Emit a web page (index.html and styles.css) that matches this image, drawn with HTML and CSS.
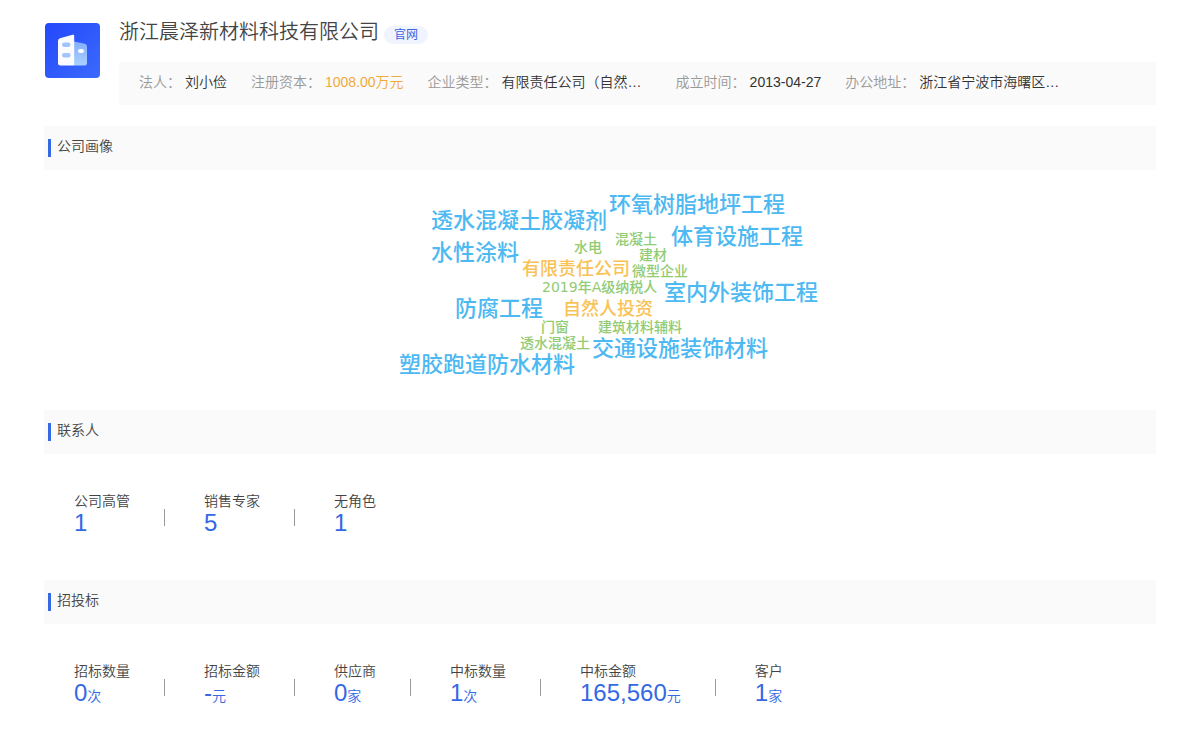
FILE: index.html
```html
<!DOCTYPE html>
<html lang="zh-CN">
<head>
<meta charset="utf-8">
<title>浙江晨泽新材料科技有限公司</title>
<link rel="stylesheet" href="styles.css">
</head>
<body>
<main class="page">
  <header class="company">
    <svg class="logo" viewBox="0 0 55 55" aria-hidden="true">
      <defs>
        <linearGradient id="bg" x1="0" y1="0" x2="1" y2="1"><stop offset="0" stop-color="#2348fb"/><stop offset="1" stop-color="#3b6afc"/></linearGradient>
        <linearGradient id="wing" x1="0" y1="0" x2="0" y2="1"><stop offset="0" stop-color="#84aefb"/><stop offset="1" stop-color="#a9d0fd"/></linearGradient>
      </defs>
      <rect width="55" height="55" rx="4" fill="url(#bg)"/>
      <path d="M29 18.500l11 2.300q2 .5 2 2.500v17q0 2.200-2.200 2.200H29z" fill="url(#wing)"/>
      <path d="M13 18q0-2 2-2.700l12.500-3.500q1.700-.4 1.700 1.200v29.500H15.300Q13 42.500 13 40.300z" fill="#fafcff"/>
      <rect x="17" y="19.500" width="8.500" height="4.500" rx="2.200" fill="#a3c4fb"/>
      <rect x="17" y="30" width="8.500" height="4.500" rx="2.200" fill="#a3c4fb"/>
      <rect x="33" y="26" width="6" height="4" rx="2" fill="#fafcff"/>
    </svg>
    <div class="summary">
      <div class="title-row">
        <h1 class="name">浙江晨泽新材料科技有限公司</h1>
        <a class="site" href="#">官网</a>
      </div>
      <dl class="facts">
        <div class="fact"><dt>法人：</dt><dd>刘小俭</dd></div>
        <div class="fact"><dt>注册资本：</dt><dd class="money">1008.00万元</dd></div>
        <div class="fact"><dt>企业类型：</dt><dd class="long">有限责任公司（自然…</dd></div>
        <div class="fact"><dt>成立时间：</dt><dd>2013-04-27</dd></div>
        <div class="fact"><dt>办公地址：</dt><dd class="long">浙江省宁波市海曙区…</dd></div>
      </dl>
    </div>
  </header>

  <section>
    <h2 class="heading">公司画像</h2>
    <div class="cloud">
      <span class="word large w1">环氧树脂地坪工程</span>
      <span class="word large w2">透水混凝土胶凝剂</span>
      <span class="word large w3">体育设施工程</span>
      <span class="word large w4">水性涂料</span>
      <span class="word large w5">室内外装饰工程</span>
      <span class="word large w6">防腐工程</span>
      <span class="word large w7">交通设施装饰材料</span>
      <span class="word large w8">塑胶跑道防水材料</span>
      <span class="word medium w9">有限责任公司</span>
      <span class="word medium w10">自然人投资</span>
      <span class="word small w11">混凝土</span>
      <span class="word small w12">水电</span>
      <span class="word small w13">建材</span>
      <span class="word small w14">微型企业</span>
      <span class="word small w15">2019年A级纳税人</span>
      <span class="word small w16">门窗</span>
      <span class="word small w17">建筑材料辅料</span>
      <span class="word small w18">透水混凝土</span>
    </div>
  </section>

  <section>
    <h2 class="heading">联系人</h2>
    <dl class="stats">
      <div class="stat"><dt>公司高管</dt><dd>1</dd></div>
      <div class="stat"><dt>销售专家</dt><dd>5</dd></div>
      <div class="stat"><dt>无角色</dt><dd>1</dd></div>
    </dl>
  </section>

  <section>
    <h2 class="heading">招投标</h2>
    <dl class="stats">
      <div class="stat"><dt>招标数量</dt><dd>0<small>次</small></dd></div>
      <div class="stat"><dt>招标金额</dt><dd>-<small>元</small></dd></div>
      <div class="stat"><dt>供应商</dt><dd>0<small>家</small></dd></div>
      <div class="stat"><dt>中标数量</dt><dd>1<small>次</small></dd></div>
      <div class="stat"><dt>中标金额</dt><dd>165,560<small>元</small></dd></div>
      <div class="stat"><dt>客户</dt><dd>1<small>家</small></dd></div>
    </dl>
  </section>
</main>
</body>
</html>
```
FILE: styles.css
```css
* { box-sizing: border-box; }

body {
  margin: 0;
  background: #fff;
  color: #444;
  font: 14px/20px "Liberation Sans", "Noto Sans CJK SC", sans-serif;
}

h1, h2, dl, dd { margin: 0; font-weight: 350; }

.page { padding: 16px 44px 0; }

.company {
  display: flex;
  gap: 19px;
  padding-left: 1px;
  margin-bottom: 21px;
}

.logo {
  flex: none;
  width: 55px;
  height: 55px;
  margin-top: 7px;
}

.summary { flex: 1; min-width: 0; }

.title-row {
  display: flex;
  align-items: center;
  gap: 5px;
  height: 32px;
  margin-bottom: 14px;
}

.name { font-size: 20px; line-height: 30px; }

.site {
  margin-top: 6px;
  padding: 0 10px;
  border-radius: 9px;
  background: #eff4fe;
  color: #3a66e0;
  font-size: 12px;
  line-height: 18px;
  text-decoration: none;
}

.facts {
  display: flex;
  gap: 24px;
  height: 43px;
  padding: 10px 20px;
  background: #fafafa;
  white-space: nowrap;
}

.fact { display: flex; gap: 4px; }
.fact dt { color: #999; font-weight: 350; }
.fact dd { color: #333; font-weight: 350; }
.fact .long { width: 150px; }
.fact .money { color: #f0a93a; }

.heading {
  display: flex;
  gap: 6px;
  height: 44px;
  padding: 10px 4px;
  background: #fafafa;
  font-size: 14px;
  line-height: 20px;
}

.heading::before {
  content: "";
  width: 3px;
  height: 18px;
  margin-top: 3px;
  background: #3568e5;
}

.cloud {
  position: relative;
  width: 440px;
  height: 240px;
  margin: 0 auto;
  font-family: "DejaVu Sans", "Noto Sans CJK SC", sans-serif;
  font-weight: 500;
  line-height: 24px;
  white-space: nowrap;
}

.word { position: absolute; }
.large { color: #4db9f2; font-size: 22px; }
.medium { color: #f9c255; font-size: 18px; }
.small { color: #91cb74; font-size: 14px; }

.w1 { left: 229px; top: 23px; }
.w2 { left: 51px; top: 39px; }
.w3 { left: 291px; top: 55px; }
.w4 { left: 51px; top: 71px; }
.w5 { left: 284px; top: 111px; }
.w6 { left: 75px; top: 127px; }
.w7 { left: 212px; top: 167px; }
.w8 { left: 19px; top: 183px; }
.w9 { left: 142px; top: 87px; }
.w10 { left: 183px; top: 127px; }
.w11 { left: 235px; top: 57px; }
.w12 { left: 194px; top: 65px; }
.w13 { left: 259px; top: 73px; }
.w14 { left: 252px; top: 89px; }
.w15 { left: 162px; top: 105px; }
.w16 { left: 161px; top: 145px; }
.w17 { left: 218px; top: 145px; }
.w18 { left: 140px; top: 161px; }

.stats {
  display: flex;
  height: 126px;
  padding: 37px 30px;
}

.stat {
  display: flex;
  flex-direction: column;
  position: relative;
  padding-right: 74px;
}

.stat dt { font-weight: 350; }

.stat dd {
  color: #3568e5;
  font-size: 24px;
  line-height: 24px;
}

.stat small { font-size: 14px; }

.stat:not(:last-child)::after {
  content: "";
  position: absolute;
  right: 39px;
  top: 18px;
  width: 1px;
  height: 17px;
  background: #999;
}
```
